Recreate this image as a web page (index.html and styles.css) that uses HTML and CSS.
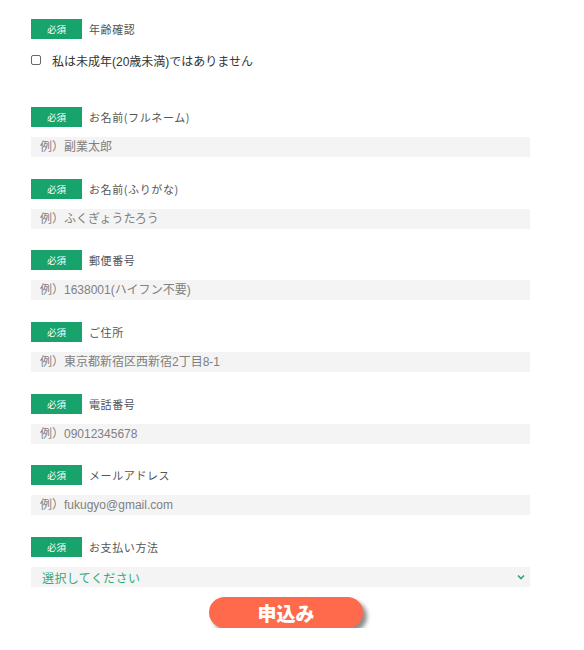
FILE: index.html
```html
<!DOCTYPE html>
<html lang="ja">
<head>
<meta charset="utf-8">
<title>申込みフォーム</title>
<link rel="stylesheet" href="styles.css">
</head>
<body>
<form class="form">
  <div class="field field-age">
    <div class="head"><span class="req">必須</span><span class="label">年齢確認</span></div>
    <label class="check"><input type="checkbox" class="box"><span>私は未成年(20歳未満)ではありません</span></label>
  </div>
  <div class="field">
    <div class="head"><span class="req">必須</span><span class="label">お名前(フルネーム)</span></div>
    <input class="text" type="text" placeholder="例）副業太郎">
  </div>
  <div class="field">
    <div class="head"><span class="req">必須</span><span class="label">お名前(ふりがな)</span></div>
    <input class="text" type="text" placeholder="例）ふくぎょうたろう">
  </div>
  <div class="field">
    <div class="head"><span class="req">必須</span><span class="label">郵便番号</span></div>
    <input class="text" type="text" placeholder="例）1638001(ハイフン不要)">
  </div>
  <div class="field">
    <div class="head"><span class="req">必須</span><span class="label">ご住所</span></div>
    <input class="text" type="text" placeholder="例）東京都新宿区西新宿2丁目8-1">
  </div>
  <div class="field">
    <div class="head"><span class="req">必須</span><span class="label">電話番号</span></div>
    <input class="text" type="text" placeholder="例）09012345678">
  </div>
  <div class="field">
    <div class="head"><span class="req">必須</span><span class="label">メールアドレス</span></div>
    <input class="text" type="text" placeholder="例）fukugyo@gmail.com">
  </div>
  <div class="field field-last">
    <div class="head"><span class="req">必須</span><span class="label">お支払い方法</span></div>
    <div class="select-wrap">
      <select class="select"><option>選択してください</option></select>
      <svg class="chev" width="8" height="6" viewBox="0 0 8 6"><path d="M1 1.5 L4 4.5 L7 1.5" fill="none" stroke="#2fa574" stroke-width="1.6"/></svg>
    </div>
  </div>
  <div class="actions"><button type="button" class="submit">申込み</button></div>
</form>
</body>
</html>
```
FILE: styles.css
```css
html, body {
  margin: 0;
  padding: 0;
  background: #ffffff;
}
body {
  font-family: "Liberation Sans", "Noto Sans CJK JP", sans-serif;
  color: #333;
}
.form {
  width: 499px;
  padding: 19px 0 0 31px;
}
.field {
  display: flex;
  flex-direction: column;
  gap: 10px;
  margin-bottom: 21.7px;
}
.field-age {
  gap: 11px;
  margin-bottom: 37px;
}
.field-last {
  margin-bottom: 10px;
}
.head {
  display: flex;
  align-items: center;
  height: 20px;
}
.req {
  display: flex;
  align-items: center;
  justify-content: center;
  width: 51px;
  height: 20px;
  background: #17a36b;
  color: #fff;
  font-size: 9.5px;
  font-family: "Noto Sans CJK JP", sans-serif;
}
.label {
  margin-left: 7px;
  font-size: 11px;
  letter-spacing: 0.6px;
  color: #555;
  font-family: "Noto Sans CJK JP", sans-serif;
}
.check {
  display: flex;
  align-items: center;
  height: 20px;
  font-size: 12px;
  color: #333;
}
.box {
  appearance: none;
  -webkit-appearance: none;
  width: 10px;
  height: 10px;
  margin: 0 11px 0 0;
  border: 1px solid #666;
  border-radius: 2px;
  background: #fff;
}
.text {
  box-sizing: border-box;
  width: 499px;
  height: 20px;
  margin: 0;
  padding: 0 0 0 9px;
  border: none;
  outline: none;
  background: #f4f4f4;
  font-family: "Liberation Sans", "Noto Sans CJK JP", sans-serif;
  font-size: 12px;
  color: #333;
}
.text::placeholder {
  color: #808080;
}
.select-wrap {
  position: relative;
  width: 499px;
  height: 20px;
}
.select {
  appearance: none;
  -webkit-appearance: none;
  box-sizing: border-box;
  width: 499px;
  height: 20px;
  margin: 0;
  padding: 0 0 0 11px;
  border: none;
  border-radius: 0;
  outline: none;
  background: #f4f4f4;
  color: #35a97a;
  font-family: "Noto Sans CJK JP", sans-serif;
  font-size: 12px;
  letter-spacing: 0.4px;
}
.chev {
  position: absolute;
  right: 5px;
  top: 7px;
}
.actions {
  display: flex;
  padding-left: 178px;
}
.submit {
  width: 154px;
  height: 31px;
  margin: 0;
  padding: 0;
  border: none;
  border-radius: 16px;
  background: #ff6a4c;
  color: #fff;
  font-family: "Noto Sans CJK JP", sans-serif;
  font-weight: 900;
  font-size: 19px;
  line-height: 31px;
  box-shadow: 4px 4px 4px rgba(0, 0, 0, 0.45);
}
```
